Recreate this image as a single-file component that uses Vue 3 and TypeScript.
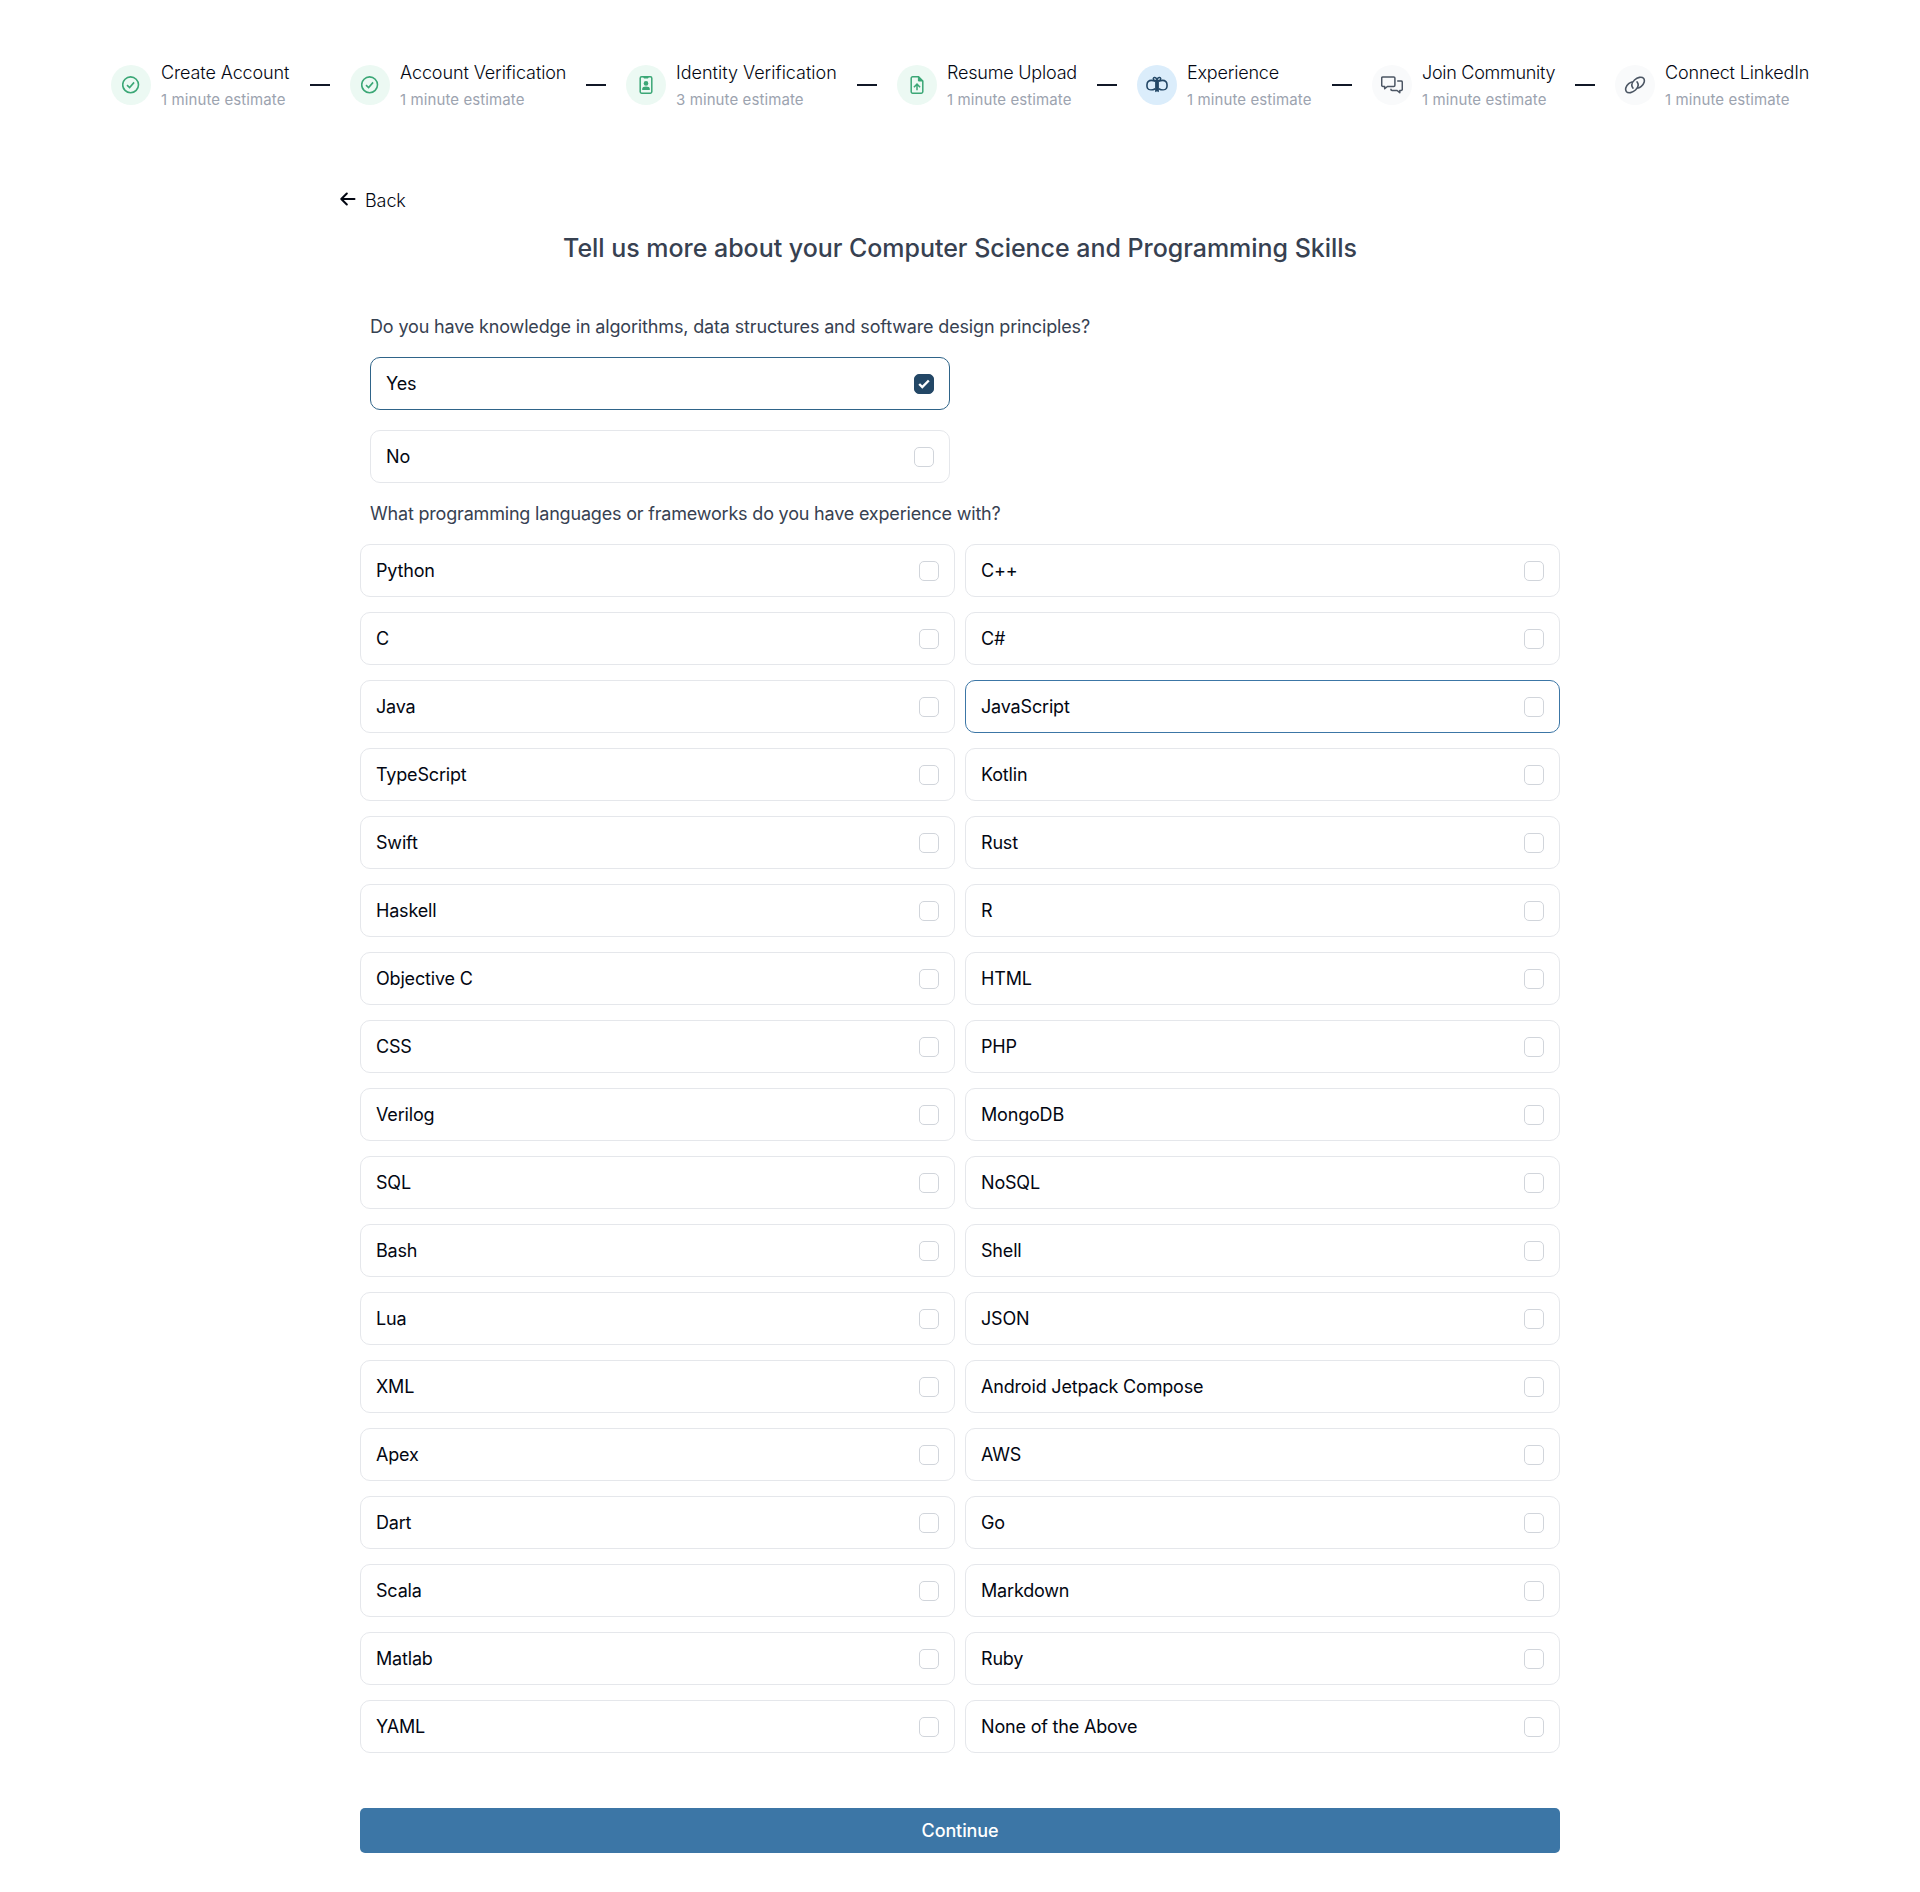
<script setup lang="ts">
import { ref } from 'vue'

type IconName = 'check' | 'badge' | 'upload' | 'gift' | 'chat' | 'link'
type StepState = 'done' | 'active' | 'todo'

interface Step {
  title: string
  minutes: number
  icon: IconName
  state: StepState
  width: number
  tracking: number
}

const steps: Step[] = [
  { title: 'Create Account', minutes: 1, icon: 'check', state: 'done', width: 129, tracking: -0.11 },
  { title: 'Account Verification', minutes: 1, icon: 'check', state: 'done', width: 166, tracking: -0.1 },
  { title: 'Identity Verification', minutes: 3, icon: 'badge', state: 'done', width: 161, tracking: 0 },
  { title: 'Resume Upload', minutes: 1, icon: 'upload', state: 'done', width: 130, tracking: -0.2 },
  { title: 'Experience', minutes: 1, icon: 'gift', state: 'active', width: 125, tracking: -0.2 },
  { title: 'Join Community', minutes: 1, icon: 'chat', state: 'todo', width: 133, tracking: -0.28 },
  { title: 'Connect LinkedIn', minutes: 1, icon: 'link', state: 'todo', width: 144, tracking: -0.14 },
]

const languages: string[] = [
  'Python', 'C++', 'C', 'C#', 'Java', 'JavaScript', 'TypeScript', 'Kotlin', 'Swift', 'Rust',
  'Haskell', 'R', 'Objective C', 'HTML', 'CSS', 'PHP', 'Verilog', 'MongoDB', 'SQL', 'NoSQL',
  'Bash', 'Shell', 'Lua', 'JSON', 'XML', 'Android Jetpack Compose', 'Apex', 'AWS', 'Dart', 'Go',
  'Scala', 'Markdown', 'Matlab', 'Ruby', 'YAML', 'None of the Above',
]

const knowledge = ref<string>('Yes')
const selected = ref<string[]>([])
const focused = ref<string>('JavaScript')

function toggle(name: string): void {
  focused.value = name
  selected.value = selected.value.includes(name)
    ? selected.value.filter((item) => item !== name)
    : [...selected.value, name]
}
</script>

<template>
  <main class="page">
    <nav class="steps">
      <template v-for="(step, index) in steps" :key="step.title">
        <span v-if="index > 0" class="dash"></span>
        <div class="step">
          <span class="bubble" :class="step.state">
            <svg v-if="step.icon === 'check'" width="18" height="18" viewBox="0 0 18 18" fill="none" stroke="currentColor" stroke-width="1.6">
              <circle cx="8.6" cy="8.8" r="7.9" />
              <path d="M5 9.1 7.600 11.500 12.100 6.400" />
            </svg>
            <svg v-else-if="step.icon === 'badge'" width="18" height="18" viewBox="0 0 18 18" fill="currentColor">
              <rect x="3.2" y="0.8" width="11.6" height="16.4" rx="1.4" fill="none" stroke="currentColor" stroke-width="1.5" />
              <path d="M6.4.4h5.2v1.2a.8.8 0 0 1-.8.8H7.2a.8.8 0 0 1-.8-.8z" />
              <circle cx="9" cy="7.4" r="2.3" />
              <path d="M5.2 14v-1.200c0-1.500 1.600-2.200 3.800-2.200s3.800.7 3.800 2.200V14z" />
            </svg>
            <svg v-else-if="step.icon === 'upload'" width="18" height="18" viewBox="0 0 18 18" fill="none" stroke="currentColor" stroke-width="1.5">
              <path d="M10.600.8H4.600a1.400 1.400 0 0 0-1.400 1.400v13.600a1.400 1.400 0 0 0 1.400 1.400h8.800a1.400 1.400 0 0 0 1.400-1.400V5z" stroke-linejoin="round" />
              <path d="M10.400.8V5h4.400z" fill="currentColor" stroke-width="1" />
              <path d="M9 14.200V8.400M5.900 11.200 9 8.100l3.100 3.100" />
            </svg>
            <svg v-else-if="step.icon === 'gift'" width="22" height="18" viewBox="0 0 22 18" fill="none" stroke="currentColor" stroke-width="1.6">
              <path d="M9.300 5.200C7 4.300 3.600 4.200 2.100 5.600.7 7 .6 10.800 1.600 12.400c1.200 1.800 4.700 1.800 7.700.3M12.700 5.200c2.300-.9 5.700-1 7.200.4 1.400 1.400 1.500 5.200.5 6.800-1.200 1.800-4.700 1.800-7.700.3" />
              <path d="M9.100 4.600h3.800v11.600l-1.400-.9-.5.9-.5-.9-1.400.9z" fill="currentColor" stroke="none" />
              <path d="M10.800 4.600C9 4.600 7 4 7.200 2.600 7.500 1 10 .8 11 3.800 12 .8 14.500 1 14.800 2.600 15 4 13 4.600 11.200 4.600" stroke-width="1.400" />
            </svg>
            <svg v-else-if="step.icon === 'chat'" width="22" height="18" viewBox="0 0 22 18" fill="none" stroke="currentColor" stroke-width="1.5" stroke-linejoin="round">
              <path d="M1.900.9h10.800q1.200 0 1.200 1.200v7.200q0 1.200-1.200 1.200H6.400l-2.700 2.300v-2.300H1.900Q.7 10.500.7 9.300V2.100Q.7.9 1.900.9z" />
              <path d="M16.200 5.100h3.900q1.200 0 1.200 1.200v7q0 1.200-1.200 1.200h-1.300v2.200l-2.700-2.200h-5q-1.200 0-1.200-1.200v-.6" />
            </svg>
            <svg v-else width="22" height="18" viewBox="0 0 22 18" fill="none" stroke="currentColor" stroke-width="1.6" stroke-linecap="round">
              <path d="M8.900 12.100C7.200 9.800 7.700 6.600 10.500 4c3-2.700 7.200-3.700 9-1.700 1.800 2.100.6 5.700-2.200 8-1.100.9-2.200 1.500-3.300 1.800" />
              <path d="M13.100 5.900c1.700 2.300 1.200 5.500-1.600 8.100-3 2.700-7.200 3.700-9 1.700C.7 13.600 1.900 10 4.700 7.700c1.100-.9 2.200-1.500 3.300-1.800" />
            </svg>
          </span>
          <div class="step-text" :style="{ width: step.width + 'px' }">
            <div class="step-title" :style="{ letterSpacing: step.tracking + 'px' }">{{ step.title }}</div>
            <div class="step-time">{{ step.minutes }} minute estimate</div>
          </div>
        </div>
      </template>
    </nav>

    <section class="content">
      <a class="back">
        <svg width="16" height="14" viewBox="0 0 16 14" fill="none" stroke="currentColor" stroke-width="2" stroke-linecap="round" stroke-linejoin="round">
          <path d="M14.500 7H1.500M6.800 1.500 1.300 7l5.500 5.500" />
        </svg>
        <span>Back</span>
      </a>
      <h1>Tell us more about your Computer Science and Programming Skills</h1>

      <p class="question first">Do you have knowledge in algorithms, data structures and software design principles?</p>
      <div class="answers">
        <div
          v-for="answer in ['Yes', 'No']"
          :key="answer"
          class="option"
          :class="{ chosen: knowledge === answer }"
          @click="knowledge = answer"
        >
          <span>{{ answer }}</span>
          <span class="box">
            <svg v-if="knowledge === answer" width="12" height="10" viewBox="0 0 12 10" fill="none" stroke="#fff" stroke-width="2.4">
              <path d="M1.200 5 4.300 8.100 10.800 1.500" />
            </svg>
          </span>
        </div>
      </div>

      <p class="question second">What programming languages or frameworks do you have experience with?</p>
      <div class="grid">
        <div
          v-for="name in languages"
          :key="name"
          class="option"
          :class="{ chosen: selected.includes(name), focused: focused === name }"
          @click="toggle(name)"
        >
          <span>{{ name }}</span>
          <span class="box">
            <svg v-if="selected.includes(name)" width="12" height="10" viewBox="0 0 12 10" fill="none" stroke="#fff" stroke-width="2.4">
              <path d="M1.200 5 4.300 8.100 10.800 1.500" />
            </svg>
          </span>
        </div>
      </div>
      <button class="continue" type="button">Continue</button>
    </section>
  </main>
</template>

<style>
body {
  background: #fff;
}
</style>

<style scoped>
.page {
  box-sizing: border-box;
  min-height: 1892px;
  padding-top: 58px;
  font-family: Inter, 'Liberation Sans', sans-serif;
  font-size: 18px;
  line-height: 27px;
  color: #111827;
}
.steps {
  display: flex;
  justify-content: center;
  align-items: center;
  gap: 20px;
  height: 54px;
}
.step {
  display: flex;
  align-items: center;
  gap: 10px;
  white-space: nowrap;
}
.bubble {
  display: flex;
  align-items: center;
  justify-content: center;
  width: 40px;
  height: 40px;
  border-radius: 50%;
}
.bubble.done {
  background: #ecf9f3;
  color: #3ba776;
}
.bubble.active {
  background: #dbedfb;
  color: #234766;
}
.bubble.todo {
  background: #f9fafb;
  color: #4b5563;
}
.step-text {
  padding-top: 2px;
}
.step-title {
  font-weight: 350;
  color: #030712;
}
.step-time {
  font-size: 15px;
  font-weight: 400;
  letter-spacing: 0.1px;
  color: #9ca3af;
}
.dash {
  width: 20px;
  height: 2px;
  background: #111827;
}
.content {
  width: 1200px;
  margin: 0 auto;
}
.back {
  display: flex;
  align-items: center;
  gap: 9px;
  width: max-content;
  margin: 75px 0 0 -20px;
  font-weight: 350;
  letter-spacing: -0.1px;
  color: #030712;
}
.back svg {
  margin-bottom: 4px;
}
h1 {
  margin: 16px 0 0;
  font-size: 25px;
  line-height: 36px;
  font-weight: 450;
  letter-spacing: -0.03px;
  text-align: center;
  color: #374151;
}
.question {
  margin: 0 0 0 10px;
  letter-spacing: -0.155px;
  color: #374151;
}
.question.first {
  margin-top: 47px;
}
.question.second {
  margin-top: 17px;
  letter-spacing: -0.19px;
}
.answers {
  display: flex;
  flex-direction: column;
  gap: 20px;
  width: 580px;
  margin: 17px 0 0 10px;
}
.option {
  box-sizing: border-box;
  display: flex;
  align-items: center;
  justify-content: space-between;
  height: 53px;
  padding: 0 15px;
  border: 1px solid #e5e7eb;
  border-radius: 10px;
  font-weight: 430;
  letter-spacing: -0.18px;
  color: #030712;
}
.option.chosen {
  border-color: #2f6489;
}
.option.focused {
  border-color: #3c76a6;
}
.box {
  box-sizing: border-box;
  display: flex;
  align-items: center;
  justify-content: center;
  width: 20px;
  height: 20px;
  border: 1px solid #d1d5db;
  border-radius: 5px;
}
.chosen .box {
  border-color: #234766;
  background: #234766;
}
.grid {
  display: grid;
  grid-template-columns: 1fr 1fr;
  gap: 15px 10px;
  margin-top: 17px;
}
.continue {
  display: block;
  width: 100%;
  height: 45px;
  margin-top: 55px;
  padding: 0;
  border: 0;
  border-radius: 5px;
  background: #3c76a6;
  color: #fff;
  font: 450 18px/27px Inter, 'Liberation Sans', sans-serif;
  letter-spacing: -0.12px;
}
</style>
